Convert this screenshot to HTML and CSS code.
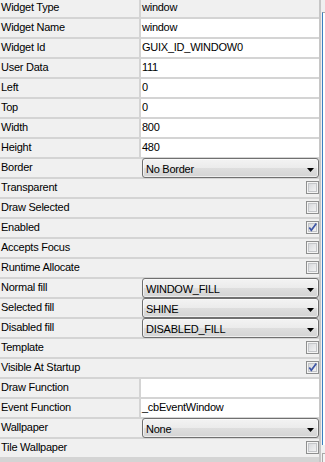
FILE: index.html
```html
<!DOCTYPE html>
<html>
<head>
<meta charset="utf-8">
<link rel="stylesheet" href="styles.css">
</head>
<body>
<div class="frame">
  <div class="props">
    <div class="row"><div class="label">Widget Type</div><div class="val ro">window</div></div>
    <div class="row"><div class="label">Widget Name</div><div class="val">window</div></div>
    <div class="row"><div class="label">Widget Id</div><div class="val">GUIX_ID_WINDOW0</div></div>
    <div class="row"><div class="label">User Data</div><div class="val">111</div></div>
    <div class="row"><div class="label">Left</div><div class="val">0</div></div>
    <div class="row"><div class="label">Top</div><div class="val">0</div></div>
    <div class="row"><div class="label">Width</div><div class="val">800</div></div>
    <div class="row"><div class="label">Height</div><div class="val">480</div></div>
    <div class="row"><div class="label">Border</div><div class="pval"><div class="combo"><span>No Border</span><svg class="arrow" width="7" height="4" viewBox="0 0 7 4"><path d="M0 0H7L3.5 4Z" fill="#000"/></svg></div></div></div>
    <div class="row"><div class="label">Transparent</div><div class="pval chk"><span class="cb"></span></div></div>
    <div class="row"><div class="label">Draw Selected</div><div class="pval chk"><span class="cb"></span></div></div>
    <div class="row"><div class="label">Enabled</div><div class="pval chk"><span class="cb"><svg width="11" height="11" viewBox="0 0 11 11"><path d="M2.3 5.6L4.3 8.3L9.3 1.6" fill="none" stroke="#3e56a6" stroke-width="1.7"/></svg></span></div></div>
    <div class="row"><div class="label">Accepts Focus</div><div class="pval chk"><span class="cb"></span></div></div>
    <div class="row"><div class="label">Runtime Allocate</div><div class="pval chk"><span class="cb"></span></div></div>
    <div class="row"><div class="label">Normal fill</div><div class="pval"><div class="combo"><span>WINDOW_FILL</span><svg class="arrow" width="7" height="4" viewBox="0 0 7 4"><path d="M0 0H7L3.5 4Z" fill="#000"/></svg></div></div></div>
    <div class="row"><div class="label">Selected fill</div><div class="pval"><div class="combo"><span>SHINE</span><svg class="arrow" width="7" height="4" viewBox="0 0 7 4"><path d="M0 0H7L3.5 4Z" fill="#000"/></svg></div></div></div>
    <div class="row"><div class="label">Disabled fill</div><div class="pval"><div class="combo"><span>DISABLED_FILL</span><svg class="arrow" width="7" height="4" viewBox="0 0 7 4"><path d="M0 0H7L3.5 4Z" fill="#000"/></svg></div></div></div>
    <div class="row"><div class="label">Template</div><div class="pval chk"><span class="cb"></span></div></div>
    <div class="row"><div class="label">Visible At Startup</div><div class="pval chk"><span class="cb"><svg width="11" height="11" viewBox="0 0 11 11"><path d="M2.3 5.6L4.3 8.3L9.3 1.6" fill="none" stroke="#3e56a6" stroke-width="1.7"/></svg></span></div></div>
    <div class="row"><div class="label">Draw Function</div><div class="val"></div></div>
    <div class="row"><div class="label">Event Function</div><div class="val">_cbEventWindow</div></div>
    <div class="row"><div class="label">Wallpaper</div><div class="pval"><div class="combo"><span>None</span><svg class="arrow" width="7" height="4" viewBox="0 0 7 4"><path d="M0 0H7L3.5 4Z" fill="#000"/></svg></div></div></div>
    <div class="row"><div class="label">Tile Wallpaper</div><div class="pval chk"><span class="cb"></span></div></div>
  </div>
  <div class="vbar"></div>
  <div class="side">
    <div class="panel"></div>
    <div class="corner"></div>
  </div>
</div>
</body>
</html>
```

FILE: styles.css
```css
html, body {
  margin: 0;
  padding: 0;
}
body {
  background: #d4d4d4;
  font-family: "Liberation Sans", Arial, sans-serif;
  font-size: 11px;
  letter-spacing: -0.25px;
  color: #000;
  overflow: hidden;
}
.frame {
  display: flex;
  width: 325px;
  height: 462px;
}
.props {
  display: flex;
  flex-direction: column;
  gap: 2px;
  width: 319px;
  margin-top: -1px;
  background: #d4d4d4;
}
.row {
  display: grid;
  grid-template-columns: 139px 180px;
  height: 18px;
  background: #f0f0f0;
}
.label {
  padding-left: 1px;
  line-height: 16px;
  white-space: nowrap;
}
.val {
  border-left: 2px solid #d4d4d4;
  background: #fff;
  padding-left: 1px;
  line-height: 16px;
  white-space: nowrap;
}
.val.ro {
  background: #f0f0f0;
}
.pval {
  display: flex;
  min-width: 0;
}
.chk {
  justify-content: flex-end;
}
.cb {
  box-sizing: border-box;
  width: 13px;
  height: 13px;
  margin-top: 2px;
  border: 1px solid #8e8f8f;
  background: linear-gradient(135deg, #d2d4d8, #f7f7f7);
  box-shadow: inset 0 0 0 1px #f4f4f4, inset 0 0 0 2px #c4c6c9;
  display: flex;
}
.combo {
  box-sizing: border-box;
  height: 20px;
  width: 177px;
  margin: -1px 0 -1px 3px;
  border: 1px solid #707070;
  border-radius: 3px;
  background: linear-gradient(#f3f3f3, #ebebeb 50%, #dedede 50%, #d4d4d4);
  box-shadow: inset 0 0 0 1px rgba(255, 255, 255, 0.6);
  display: flex;
  justify-content: space-between;
  padding: 0 4px 0 3px;
  line-height: 16px;
  padding-top: 2px;
  white-space: nowrap;
}
.arrow {
  margin-top: 7px;
}
.vbar {
  width: 2px;
  background: #c6c6c6;
}
.side {
  width: 4px;
  background: #f0f0f0;
  display: flex;
  flex-direction: column;
}
.panel {
  margin-top: 12px;
  margin-left: 1px;
  height: 432px;
  border-top: 1px solid #a9a9a9;
  border-left: 1px solid #3c7fc0;
  background: #fff;
}
.corner {
  margin-top: 8px;
  margin-left: 1px;
  flex: 1;
  border-top: 1px solid #a9a9a9;
  border-left: 1px solid #a9a9a9;
  background: #f4f4f4;
}
```
